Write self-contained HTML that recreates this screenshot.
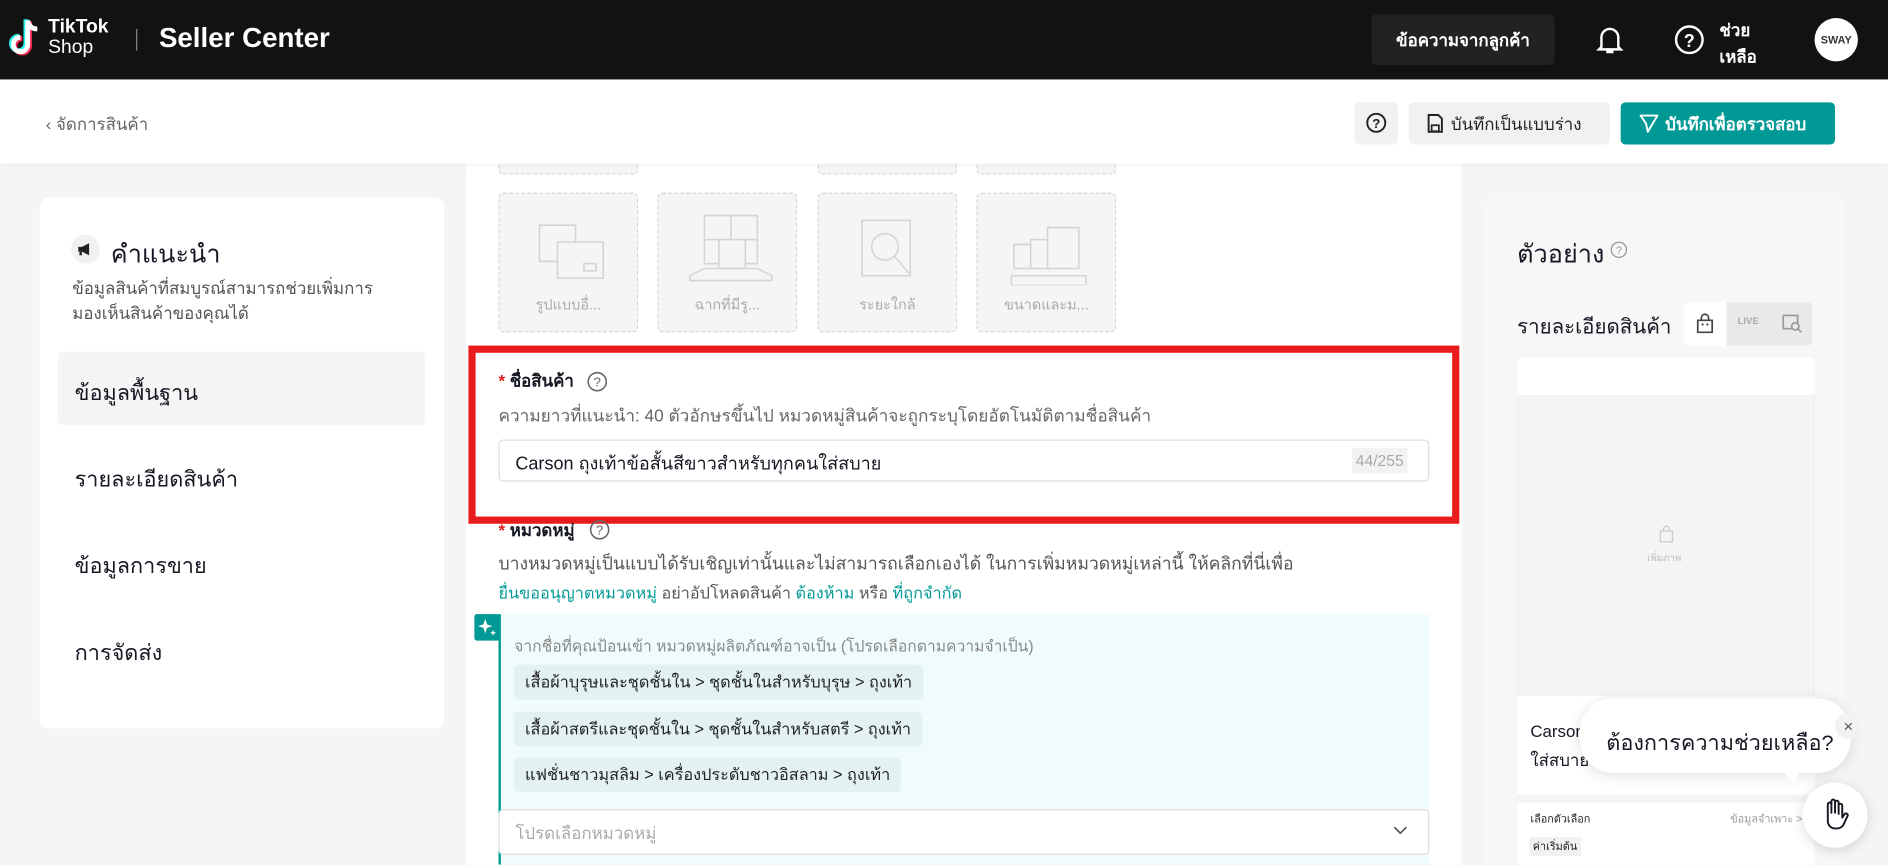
<!DOCTYPE html>
<html><head><meta charset="utf-8">
<style>
html,body{margin:0;padding:0;width:1888px;height:864px;overflow:hidden;background:#f5f5f5}
#w{position:absolute;left:0;top:0;width:1568px;height:718px;transform:scale(1.20408);transform-origin:0 0;font-family:"Liberation Sans",sans-serif;color:#161823;background:#f5f5f5;overflow:hidden}
.a{position:absolute;white-space:nowrap}
.ph{position:absolute;top:160px;width:116px;height:116px;border:1px dashed #d6d6d6;border-radius:4px;background:#f5f5f5;box-sizing:border-box}
.ph span{position:absolute;bottom:12px;left:0;right:0;text-align:center;font-size:12px;color:#aaa}
.chip{position:absolute;left:427px;height:29px;line-height:29px;padding:0 9px;background:#e3f1f1;border-radius:4px;font-size:13.5px;color:#222}
.nav{position:absolute;left:62px;font-size:18px;color:#161823}
</style></head><body><div id="w">
<!-- header -->
<div class="a" style="left:0;top:0;width:1568px;height:66px;background:#121212"></div>
<svg class="a" style="left:6px;top:14px" width="30" height="36" viewBox="0 0 30 36"><path d="M17 3v20a6 6 0 1 1-6-6" fill="none" stroke="#25f4ee" stroke-width="4" transform="translate(-1.5,-1)"/><path d="M17 3v20a6 6 0 1 1-6-6" fill="none" stroke="#fe2c55" stroke-width="4" transform="translate(1.5,1)"/><path d="M17 3v20a6 6 0 1 1-6-6M17 3c1 5 4 7 8 7" fill="none" stroke="#fff" stroke-width="4"/></svg>
<div class="a" style="left:40px;top:15px;color:#fff;font-weight:bold;font-size:16px;line-height:16px">TikTok</div>
<div class="a" style="left:40px;top:31px;color:#fff;font-size:16px;line-height:18px">Shop</div>
<div class="a" style="left:113px;top:24px;width:1px;height:18px;background:#888"></div>
<div class="a" style="left:132px;top:18px;color:#fff;font-size:23px;font-weight:bold">Seller Center</div>
<div class="a" style="left:1139px;top:12px;width:152px;height:42px;background:#222;border-radius:4px;color:#fff;font-size:14px;font-weight:bold;line-height:42px;text-align:center">ข้อความจากลูกค้า</div>
<svg class="a" style="left:1325px;top:20px" width="24" height="26" viewBox="0 0 24 26"><path d="M5 19V11a7 7 0 0 1 14 0v8l2 2H3z" fill="none" stroke="#fff" stroke-width="2"/><path d="M9 23h6" stroke="#fff" stroke-width="2.5"/></svg>
<svg class="a" style="left:1390px;top:20px" width="26" height="26" viewBox="0 0 26 26"><circle cx="13" cy="13" r="11" fill="none" stroke="#fff" stroke-width="2"/><text x="13" y="19" text-anchor="middle" fill="#fff" font-size="15" font-weight="bold" font-family="Liberation Sans">?</text></svg>
<div class="a" style="left:1428px;top:14px;color:#fff;font-size:14px;font-weight:bold;line-height:22px">ช่วย<br>เหลือ</div>
<div class="a" style="left:1507px;top:15px;width:36px;height:36px;border-radius:50%;background:#fff;font-size:9px;font-weight:bold;line-height:36px;text-align:center;color:#333">SWAY</div>
<!-- center panel -->
<div class="a" style="left:387px;top:136px;width:827px;height:600px;background:#fff"></div>
<div class="ph" style="top:126px;height:19px;left:414px"></div>
<div class="ph" style="top:126px;height:19px;left:679px"></div>
<div class="ph" style="top:126px;height:19px;left:811px"></div>
<!-- sub bar -->
<div class="a" style="left:0;top:66px;width:1568px;height:70px;background:#fff;box-shadow:0 2px 4px rgba(0,0,0,.04)"></div>
<div class="a" style="left:38px;top:93px;font-size:14px;color:#666">‹ จัดการสินค้า</div>
<div class="a" style="left:1125px;top:85px;width:36px;height:35px;background:#f1f1f1;border-radius:4px"></div>
<svg class="a" style="left:1134px;top:93px" width="18" height="18"><circle cx="9" cy="9" r="7.5" fill="none" stroke="#222" stroke-width="1.6"/><text x="9" y="13.5" text-anchor="middle" font-size="11" font-weight="bold" font-family="Liberation Sans" fill="#222">?</text></svg>
<div class="a" style="left:1170px;top:85px;width:167px;height:35px;background:#f1f1f1;border-radius:4px"></div>
<svg class="a" style="left:1185px;top:94px" width="14" height="17"><path d="M1.5 1.5h8l3 3v11h-11z" fill="none" stroke="#222" stroke-width="1.6"/><rect x="4" y="10" width="6" height="5" fill="none" stroke="#222" stroke-width="1.4"/></svg>
<div class="a" style="left:1205px;top:93px;font-size:14px;color:#222">บันทึกเป็นแบบร่าง</div>
<div class="a" style="left:1346px;top:85px;width:178px;height:35px;background:#009995;border-radius:4px"></div>
<svg class="a" style="left:1361px;top:94px" width="17" height="17"><path d="M1.5 2h14l-8 13.5-1.5-7z" fill="none" stroke="#fff" stroke-width="1.6" stroke-linejoin="round"/></svg>
<div class="a" style="left:1383px;top:93px;font-size:14px;color:#fff;font-weight:bold">บันทึกเพื่อตรวจสอบ</div>
<!-- left card -->
<div class="a" style="left:33px;top:164px;width:336px;height:441px;background:#fff;border-radius:8px"></div>
<div class="a" style="left:59px;top:195px;width:24px;height:24px;border-radius:50%;background:#f1f1f1"></div>
<svg class="a" style="left:64px;top:201px" width="14" height="12"><path d="M1 4h3l6-3v10l-6-3H1z" fill="#222"/><rect x="2" y="8" width="2" height="3" fill="#222"/></svg>
<div class="a" style="left:92px;top:195px;font-size:21px;color:#161823">คำแนะนำ</div>
<div class="a" style="left:60px;top:229px;font-size:14px;color:#555;line-height:21px">ข้อมูลสินค้าที่สมบูรณ์สามารถช่วยเพิ่มการ<br>มองเห็นสินค้าของคุณได้</div>
<div class="a" style="left:48px;top:292px;width:305px;height:61px;background:#f5f5f5;border-radius:4px"></div>
<div class="nav" style="top:311px">ข้อมูลพื้นฐาน</div>
<div class="nav" style="top:383px">รายละเอียดสินค้า</div>
<div class="nav" style="top:455px">ข้อมูลการขาย</div>
<div class="nav" style="top:527px">การจัดส่ง</div>
<!-- placeholders -->
<div class="ph" style="left:414px"><svg style="position:absolute;left:30px;top:22px" width="60" height="50" fill="none" stroke="#d4d4d4" stroke-width="1.3"><path d="M3 4h30v30H3z"/><path d="M18 18h38v30H18z" fill="#f5f5f5"/><rect x="40" y="36" width="10" height="6"/></svg><span>รูปแบบอื่...</span></div>
<div class="ph" style="left:546px"><svg style="position:absolute;left:22px;top:16px" width="76" height="66" fill="none" stroke="#d4d4d4" stroke-width="1.3"><path d="M16 2h44v40H16zM38 2v40M16 22h44"/><path d="M28 22h22v24H28z" fill="#f5f5f5"/><path d="M4 52l12-6h44l12 6v4H4z"/></svg><span>ฉากที่มีรู...</span></div>
<div class="ph" style="left:679px"><svg style="position:absolute;left:30px;top:20px" width="60" height="60" fill="none" stroke="#d4d4d4" stroke-width="1.3"><path d="M6 2h40v46H6z"/><circle cx="25" cy="24" r="11" fill="#f5f5f5"/><path d="M33 32l12 14"/></svg><span>ระยะใกล้</span></div>
<div class="ph" style="left:811px"><svg style="position:absolute;left:26px;top:24px" width="66" height="52" fill="none" stroke="#d4d4d4" stroke-width="1.3"><path d="M4 18h14v20H4zM18 14h14v24H18zM32 4h26v34H32z"/><rect x="2" y="44" width="62" height="8"/></svg><span>ขนาดและม...</span></div>
<!-- red box -->
<div class="a" style="left:389px;top:287px;width:823px;height:148px;border:6px solid #e81c1c;box-sizing:border-box"></div>
<div class="a" style="left:414px;top:306px;font-size:14px;color:#161823;font-weight:bold"><span style="color:#e81c1c">* </span>ชื่อสินค้า</div>
<svg class="a" style="left:487px;top:308px" width="18" height="18"><circle cx="9" cy="9" r="7.5" fill="none" stroke="#666" stroke-width="1.3"/><text x="9" y="13" text-anchor="middle" font-size="11" font-family="Liberation Sans" fill="#666">?</text></svg>
<div class="a" style="left:414px;top:335px;font-size:14.3px;color:#666">ความยาวที่แนะนำ: 40 ตัวอักษรขึ้นไป หมวดหมู่สินค้าจะถูกระบุโดยอัตโนมัติตามชื่อสินค้า</div>
<div class="a" style="left:414px;top:365px;width:773px;height:35px;border:1px solid #ddd;border-radius:4px;box-sizing:border-box"></div>
<div class="a" style="left:428px;top:373px;font-size:15px;color:#161823">Carson ถุงเท้าข้อสั้นสีขาวสำหรับทุกคนใส่สบาย</div>
<div class="a" style="left:1123px;top:372px;height:21px;line-height:21px;padding:0 3px;background:#f2f2f2;font-size:13px;color:#aaa">44/255</div>
<!-- category -->
<div class="a" style="left:414px;top:430px;font-size:14px;color:#161823;font-weight:bold"><span style="color:#e81c1c">* </span>หมวดหมู่</div>
<svg class="a" style="left:489px;top:431px" width="18" height="18"><circle cx="9" cy="9" r="7.5" fill="none" stroke="#666" stroke-width="1.3"/><text x="9" y="13" text-anchor="middle" font-size="11" font-family="Liberation Sans" fill="#666">?</text></svg>
<div class="a" style="left:414px;top:457px;font-size:14.6px;color:#555">บางหมวดหมู่เป็นแบบได้รับเชิญเท่านั้นและไม่สามารถเลือกเองได้ ในการเพิ่มหมวดหมู่เหล่านี้ ให้คลิกที่นี่เพื่อ</div>
<div class="a" style="left:414px;top:481px;font-size:13.5px;color:#555"><span style="color:#009995">ยื่นขออนุญาตหมวดหมู่</span> อย่าอัปโหลดสินค้า <span style="color:#009995">ต้องห้าม</span> หรือ <span style="color:#009995">ที่ถูกจำกัด</span></div>
<div class="a" style="left:414px;top:510px;width:773px;height:210px;background:#f0fcfc;border-left:2px solid #009995;box-sizing:border-box"></div>
<div class="a" style="left:394px;top:510px;width:21px;height:22px;background:#009995;border-radius:2px"></div>
<svg class="a" style="left:396px;top:512px" width="18" height="18"><path d="M7 2l1.5 4.5L13 8l-4.5 1.5L7 14l-1.5-4.5L1 8l4.5-1.5z" fill="#fff"/><path d="M13.5 11l.7 1.8 1.8.7-1.8.7-.7 1.8-.7-1.8-1.8-.7 1.8-.7z" fill="#fff"/></svg>
<div class="a" style="left:427px;top:526px;font-size:13px;color:#888">จากชื่อที่คุณป้อนเข้า หมวดหมู่ผลิตภัณฑ์อาจเป็น (โปรดเลือกตามความจำเป็น)</div>
<div class="chip" style="top:552px">เสื้อผ้าบุรุษและชุดชั้นใน &gt; ชุดชั้นในสำหรับบุรุษ &gt; ถุงเท้า</div>
<div class="chip" style="top:591px">เสื้อผ้าสตรีและชุดชั้นใน &gt; ชุดชั้นในสำหรับสตรี &gt; ถุงเท้า</div>
<div class="chip" style="top:629px">แฟชั่นชาวมุสลิม &gt; เครื่องประดับชาวอิสลาม &gt; ถุงเท้า</div>
<div class="a" style="left:414px;top:672px;width:773px;height:38px;border:1px solid #ddd;border-radius:4px;background:#fff;box-sizing:border-box"></div>
<div class="a" style="left:428px;top:682px;font-size:14px;color:#aaa">โปรดเลือกหมวดหมู่</div>
<svg class="a" style="left:1157px;top:686px" width="12" height="8"><path d="M1 1l5 5 5-5" fill="none" stroke="#555" stroke-width="1.4"/></svg>
<!-- right -->
<div class="a" style="left:1233px;top:164px;width:299px;height:560px;background:#f7f7f7;border-radius:8px"></div>
<div class="a" style="left:1260px;top:195px;font-size:21px;color:#161823">ตัวอย่าง</div>
<svg class="a" style="left:1337px;top:200px" width="15" height="15"><circle cx="7.5" cy="7.5" r="6.3" fill="none" stroke="#999" stroke-width="1.1"/><text x="7.5" y="11" text-anchor="middle" font-size="9" font-family="Liberation Sans" fill="#999">?</text></svg>
<div class="a" style="left:1260px;top:258px;font-size:17px;color:#161823">รายละเอียดสินค้า</div>
<div class="a" style="left:1398px;top:251px;width:107px;height:36px;background:#e9e9e9;border-radius:4px"></div>
<div class="a" style="left:1398px;top:251px;width:36px;height:36px;background:#fff;border-radius:4px 0 0 4px"></div>
<svg class="a" style="left:1407px;top:260px" width="18" height="18"><path d="M3 6h12v10H3z" fill="none" stroke="#444" stroke-width="1.4"/><path d="M6 6V4a3 3 0 0 1 6 0v2" fill="none" stroke="#444" stroke-width="1.4"/><circle cx="7" cy="9.5" r=".9" fill="#444"/><circle cx="11" cy="9.5" r=".9" fill="#444"/></svg>
<div class="a" style="left:1443px;top:262px;font-size:8px;font-weight:bold;color:#aaa">LIVE</div>
<svg class="a" style="left:1479px;top:260px" width="18" height="16"><path d="M2 2h12v7M2 2v11h7" fill="none" stroke="#999" stroke-width="1.4"/><circle cx="12" cy="11" r="3" fill="none" stroke="#999" stroke-width="1.4"/><path d="M14 13l3 3" stroke="#999" stroke-width="1.4"/></svg>
<div class="a" style="left:1260px;top:297px;width:247px;height:430px;background:#f4f4f4;border:1px solid #eee;border-radius:4px;box-sizing:border-box"></div>
<div class="a" style="left:1260px;top:297px;width:247px;height:31px;background:#fff;border-radius:4px 4px 0 0"></div>
<svg class="a" style="left:1377px;top:436px" width="14" height="16"><path d="M2 5h10v9H2zM4.5 5V3.5a2.5 2.5 0 0 1 5 0V5" fill="none" stroke="#ccc" stroke-width="1.1"/></svg>
<div class="a" style="left:1368px;top:457px;font-size:8px;color:#bbb">เพิ่มภาพ</div>
<div class="a" style="left:1260px;top:578px;width:247px;height:82px;background:#fff"></div>
<div class="a" style="left:1271px;top:595px;font-size:14px;line-height:24px;color:#161823">Carson<br>ใส่สบาย</div>
<div class="a" style="left:1260px;top:667px;width:247px;height:60px;background:#fff"></div>
<div class="a" style="left:1271px;top:673px;font-size:9px;color:#222">เลือกตัวเลือก</div>
<div class="a" style="left:1437px;top:673px;font-size:9px;color:#999">ข้อมูลจำเพาะ &gt;</div>
<div class="a" style="left:1270px;top:695px;padding:1px 3px;background:#f1f1f1;font-size:9px;color:#222">ค่าเริ่มต้น</div>
<!-- help bubble -->
<div class="a" style="left:1312px;top:580px;width:225px;height:62px;background:#fff;border-radius:28px;box-shadow:0 2px 12px rgba(0,0,0,.12)"></div>
<svg class="a" style="left:1478px;top:636px" width="20" height="18"><path d="M0 0h18l-6 16z" fill="#fff"/></svg>
<div class="a" style="left:1334px;top:602px;font-size:18px;color:#161823">ต้องการความช่วยเหลือ?</div>
<div class="a" style="left:1524px;top:592px;width:22px;height:22px;border-radius:50%;background:#f2f2f2;font-size:14px;line-height:22px;text-align:center;color:#555">×</div>
<div class="a" style="left:1497px;top:650px;width:54px;height:54px;border-radius:50%;background:#fff;box-shadow:0 2px 10px rgba(0,0,0,.15)"></div>
<svg class="a" style="left:1512px;top:662px" width="24" height="28" viewBox="0 0 24 28"><path d="M6 16V6a1.5 1.5 0 0 1 3 0v7V3.5a1.5 1.5 0 0 1 3 0V13V4.5a1.5 1.5 0 0 1 3 0V14V7a1.5 1.5 0 0 1 3 0v10l2-3a1.5 1.5 0 0 1 2.5 1.5L19 23a6 6 0 0 1-5 3h-2a6 6 0 0 1-6-6z" fill="none" stroke="#161823" stroke-width="1.6" stroke-linejoin="round"/></svg>
</div></body></html>
